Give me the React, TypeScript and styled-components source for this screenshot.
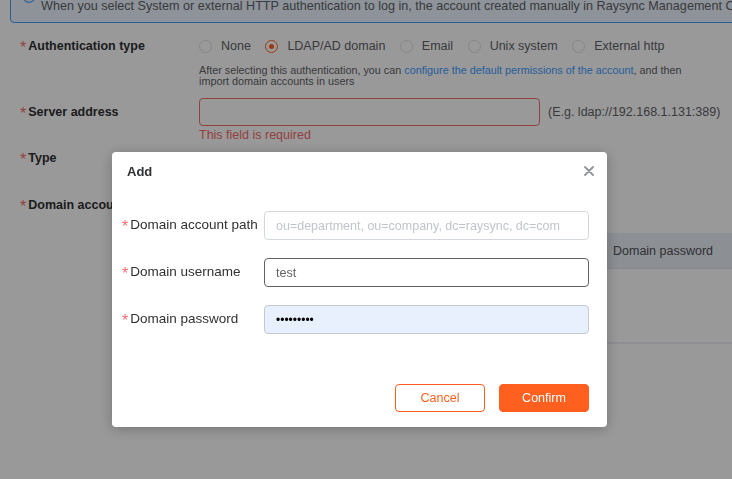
import React from "react";
import styled, { createGlobalStyle } from "styled-components";

const GlobalStyle = createGlobalStyle`
  html, body {
    margin: 0;
    padding: 0;
    overflow: hidden;
    background: #fff;
  }
  body {
    font-family: "Liberation Sans", Arial, sans-serif;
  }
  * {
    box-sizing: border-box;
  }
`;

const Page = styled.div`
  width: 1000px;
  margin-top: -11px;
  padding-left: 10px;
`;

const Alert = styled.div`
  display: flex;
  align-items: flex-start;
  gap: 6px;
  padding: 7px 12px;
  border: 1px solid #409eff;
  border-radius: 4px;
  background: #ecf5ff;
  color: #606266;
  font-size: 12.6px;
  line-height: 18px;
  white-space: nowrap;

  svg {
    flex: none;
    margin-top: -6px;
  }
`;

const FormItem = styled.div<{ $mt?: number }>`
  display: flex;
  align-items: flex-start;
  margin-top: ${(p) => p.$mt ?? 0}px;
`;

const Label = styled.div`
  width: 189px;
  flex: none;
  padding-left: 10px;
  line-height: 28px;
  font-size: 12.5px;
  font-weight: bold;
  color: #303133;
  white-space: nowrap;
`;

const Star = styled.span`
  color: #f56c6c;
  font-weight: normal;
  font-size: 16px;
  line-height: 0;
  margin-right: 2px;
  vertical-align: -3px;
`;

const Field = styled.div`
  display: flex;
  flex-direction: column;
`;

const RadioGroup = styled.div`
  display: flex;
  align-items: center;
  height: 28px;
  font-size: 12.5px;
  color: #606266;
  white-space: nowrap;
`;

const RadioOption = styled.label`
  display: flex;
  align-items: center;
  gap: 9px;
  margin-right: 14.5px;
`;

const RadioDot = styled.span<{ $checked?: boolean }>`
  width: 13px;
  height: 13px;
  border-radius: 50%;
  border: 1px solid ${(p) => (p.$checked ? "#ff5f1f" : "#dcdfe6")};
  background: #fff;
  display: flex;
  align-items: center;
  justify-content: center;

  &::after {
    content: "";
    width: 5px;
    height: 5px;
    border-radius: 50%;
    background: #ff5f1f;
    display: ${(p) => (p.$checked ? "block" : "none")};
  }
`;

const Hint = styled.div`
  margin-top: 5px;
  font-size: 10.8px;
  line-height: 11px;
  color: #606266;
  white-space: nowrap;
`;

const HintLink = styled.a`
  color: #409eff;
  text-decoration: none;
`;

const InputRow = styled.div`
  display: flex;
  align-items: center;
  gap: 8px;
`;

const TextInput = styled.input<{ $error?: boolean }>`
  width: 341px;
  height: 28px;
  padding: 0 11px;
  border: 1px solid ${(p) => (p.$error ? "#f56c6c" : "#dcdfe6")};
  border-radius: 4px;
  font-family: inherit;
  font-size: 12.5px;
  outline: none;
`;

const Example = styled.span`
  font-size: 12.5px;
  color: #606266;
  white-space: nowrap;
`;

const ErrorText = styled.div`
  margin-top: 2px;
  font-size: 12.5px;
  line-height: 14px;
  color: #f56c6c;
`;

const SmallButton = styled.button`
  width: 60px;
  height: 28px;
  border: none;
  border-radius: 4px;
  background: #ff5f1f;
  color: #fff;
  font-family: inherit;
  font-size: 12.5px;
`;

const Table = styled.div`
  width: 600px;
  margin-top: 14px;
  font-size: 12.5px;
  color: #505257;
`;

const TableHead = styled.div`
  display: grid;
  grid-template-columns: 200px 204px 110px 1fr;
  height: 36px;
  align-items: center;
  background: #e9eef7;
  border-bottom: 1px solid #dfe3ea;
`;

const HeadCell = styled.div`
  padding-left: 10px;
  white-space: nowrap;
`;

const TableBody = styled.div`
  height: 75px;
  display: flex;
  align-items: center;
  justify-content: center;
  color: #909399;
  border-bottom: 2px solid #ebeef5;
`;

const Overlay = styled.div`
  position: fixed;
  inset: 0;
  background: rgba(0, 0, 0, 0.4);
  display: flex;
  align-items: flex-start;
  padding: 152px 0 0 112px;
`;

const Modal = styled.div`
  width: 495px;
  background: #fff;
  border-radius: 4px;
  box-shadow: 0 2px 14px rgba(0, 0, 0, 0.25);
  display: flex;
  flex-direction: column;
`;

const ModalHeader = styled.div`
  height: 38px;
  display: flex;
  align-items: center;
  justify-content: space-between;
  padding: 0 13px 0 15px;
`;

const ModalTitle = styled.span`
  font-size: 13px;
  font-weight: bold;
  color: #303133;
`;

const CloseButton = styled.button`
  display: flex;
  padding: 0;
  border: none;
  background: none;
  cursor: pointer;
`;

const ModalBody = styled.div`
  display: flex;
  flex-direction: column;
  gap: 18px;
  padding: 21px 18px 0 10px;
`;

const ModalItem = styled.div`
  display: flex;
  align-items: center;
  height: 29px;
`;

const ModalLabel = styled.label`
  width: 142px;
  flex: none;
  padding-bottom: 2px;
  font-size: 13.5px;
  line-height: 16px;
  color: #303133;
  white-space: nowrap;
`;

const ModalInput = styled.input<{ $variant?: "focus" | "autofill" }>`
  flex: 1;
  min-width: 0;
  height: 29px;
  padding: 0 11px;
  border: 1px solid
    ${(p) =>
      p.$variant === "focus"
        ? "#606266"
        : p.$variant === "autofill"
          ? "#c3c9d4"
          : "#d3d7de"};
  border-radius: 4px;
  background: ${(p) => (p.$variant === "autofill" ? "#e8f0fe" : "#fff")};
  color: ${(p) => (p.$variant === "autofill" ? "#000" : "#606266")};
  font-family: inherit;
  font-size: ${(p) => (p.$variant === "autofill" ? "12px" : "12.5px")};
  outline: none;

  &::placeholder {
    color: #c0c4cc;
  }
`;

const ModalFooter = styled.div`
  display: flex;
  justify-content: flex-end;
  gap: 14px;
  padding: 50px 18px 15px;
`;

const Button = styled.button<{ $primary?: boolean }>`
  width: 90px;
  height: 28px;
  padding: 0;
  border: 1px solid #ff5f1f;
  border-radius: 4px;
  background: ${(p) => (p.$primary ? "#ff5f1f" : "#fff")};
  color: ${(p) => (p.$primary ? "#fff" : "#ff5f1f")};
  font-family: inherit;
  font-size: 12.5px;
  cursor: pointer;
`;

const authTypes = [
  { label: "None", checked: false },
  { label: "LDAP/AD domain", checked: true },
  { label: "Email", checked: false },
  { label: "Unix system", checked: false },
  { label: "External http", checked: false },
];

const domainTypes = [
  { label: "OpenLDAP", checked: true },
  { label: "AD", checked: false },
];

function Radios({ items }: { items: { label: string; checked: boolean }[] }) {
  return (
    <RadioGroup>
      {items.map((item) => (
        <RadioOption key={item.label}>
          <RadioDot $checked={item.checked} />
          {item.label}
        </RadioOption>
      ))}
    </RadioGroup>
  );
}

export default function App() {
  return (
    <>
      <GlobalStyle />
      <Page>
        <Alert>
          <svg width="12" height="12" viewBox="0 0 12 12">
            <circle cx="6" cy="6" r="5.4" fill="none" stroke="#409eff" strokeWidth="1.1" />
          </svg>
          When you select System or external HTTP authentication to log in, the account created manually
          in Raysync Management Console will not be able to log in
        </Alert>

        <FormItem $mt={9}>
          <Label>
            <Star>*</Star>Authentication type
          </Label>
          <Field>
            <Radios items={authTypes} />
            <Hint>
              After selecting this authentication, you can{" "}
              <HintLink>configure the default permissions of the account</HintLink>, and then
              <br />
              import domain accounts in users
            </Hint>
          </Field>
        </FormItem>

        <FormItem $mt={11}>
          <Label>
            <Star>*</Star>Server address
          </Label>
          <Field>
            <InputRow>
              <TextInput $error readOnly />
              <Example>(E.g. ldap://192.168.1.131:389)</Example>
            </InputRow>
            <ErrorText>This field is required</ErrorText>
          </Field>
        </FormItem>

        <FormItem $mt={2}>
          <Label>
            <Star>*</Star>Type
          </Label>
          <Radios items={domainTypes} />
        </FormItem>

        <FormItem $mt={19}>
          <Label>
            <Star>*</Star>Domain account
          </Label>
          <Field>
            <div>
              <SmallButton>Add</SmallButton>
            </div>
            <Table>
              <TableHead>
                <HeadCell>Domain account path</HeadCell>
                <HeadCell>Domain username</HeadCell>
                <HeadCell>Domain password</HeadCell>
                <HeadCell />
              </TableHead>
              <TableBody>No data</TableBody>
            </Table>
          </Field>
        </FormItem>
      </Page>

      <Overlay>
        <Modal>
          <ModalHeader>
            <ModalTitle>Add</ModalTitle>
            <CloseButton aria-label="Close">
              <svg width="10" height="10" viewBox="0 0 10 10">
                <path d="M1 1L9 9M9 1L1 9" stroke="#909399" strokeWidth="1.8" strokeLinecap="round" />
              </svg>
            </CloseButton>
          </ModalHeader>
          <ModalBody>
            <ModalItem>
              <ModalLabel>
                <Star>*</Star>Domain account path
              </ModalLabel>
              <ModalInput readOnly placeholder="ou=department, ou=company, dc=raysync, dc=com" />
            </ModalItem>
            <ModalItem>
              <ModalLabel>
                <Star>*</Star>Domain username
              </ModalLabel>
              <ModalInput $variant="focus" readOnly value="test" />
            </ModalItem>
            <ModalItem>
              <ModalLabel>
                <Star>*</Star>Domain password
              </ModalLabel>
              <ModalInput $variant="autofill" readOnly value="•••••••••" />
            </ModalItem>
          </ModalBody>
          <ModalFooter>
            <Button>Cancel</Button>
            <Button $primary>Confirm</Button>
          </ModalFooter>
        </Modal>
      </Overlay>
    </>
  );
}
